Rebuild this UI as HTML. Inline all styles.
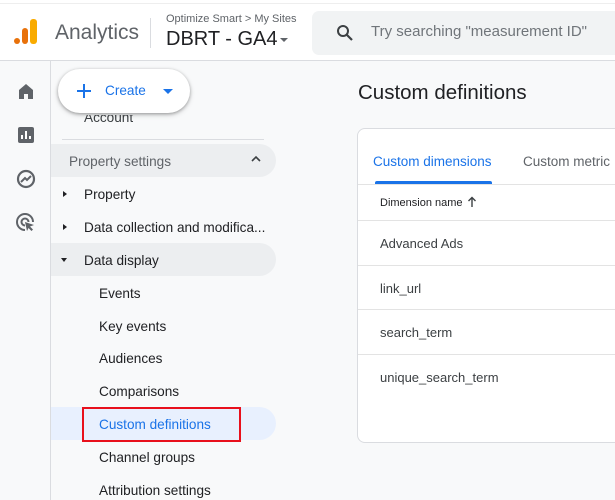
<!DOCTYPE html>
<html><head><style>
*{margin:0;padding:0;box-sizing:border-box}
body{width:615px;height:500px;overflow:hidden;background:#f8f9fa;font-family:"Liberation Sans",Arial,sans-serif;position:relative;color:#202124}
.a{position:absolute;white-space:nowrap}
.hdr{left:0;top:0;width:615px;height:61px;background:#fff;border-bottom:1px solid #dadce0}
.rail{left:0;top:61px;width:51px;height:439px;border-right:1px solid #dadce0;background:#f8f9fa}
.nav{font-size:13.6px;color:#202124}
.tri{width:0;height:0;border-top:3px solid transparent;border-bottom:3px solid transparent;border-left:4px solid #202124}
.row{left:358px;width:260px;border-top:1px solid #e3e3e3;height:0}
</style></head><body>
<div class="a hdr"></div>
<div class="a" style="top:3px;left:0;width:615px;border-top:1px solid #eee"></div>
<div class="a" style="left:14px;top:38px;width:6px;height:6px;border-radius:3px;background:#e8710a"></div>
<div class="a" style="left:22px;top:28px;width:6px;height:16px;border-radius:3px;background:#e8710a"></div>
<div class="a" style="left:30px;top:19px;width:7px;height:25px;border-radius:3px;background:#f9ab00"></div>
<div class="a" style="left:55px;top:21px;font-size:21px;color:#5f6368">Analytics</div>
<div class="a" style="left:150px;top:18px;height:30px;border-left:1px solid #dadce0"></div>
<div class="a" style="left:166px;top:13px;font-size:11px;color:#5f6368">Optimize Smart &gt; My Sites</div>
<div class="a" style="left:166px;top:28px;font-size:20px;color:#202124">DBRT - GA4</div>
<div class="a" style="left:280px;top:38px;border-left:4px solid transparent;border-right:4px solid transparent;border-top:4px solid #5f6368"></div>
<div class="a" style="left:312px;top:11px;width:310px;height:44px;background:#f1f3f4;border-radius:7px"></div>
<svg class="a" style="left:336px;top:24px" width="18" height="18" viewBox="0 0 18 18"><circle cx="7" cy="7" r="5" fill="none" stroke="#3c4043" stroke-width="2"/><path d="M11 11l5 5" stroke="#3c4043" stroke-width="2.2"/></svg>
<div class="a" style="left:371px;top:23px;font-size:15px;color:#70757a">Try searching "measurement ID"</div>
<div class="a rail"></div>
<svg class="a" style="left:17px;top:82px" width="18" height="18" viewBox="0 0 18 18"><path d="M2 8L9 2l7 6v9h-5v-5H7v5H2z" fill="#5f6368"/></svg>
<svg class="a" style="left:17px;top:126px" width="18" height="18" viewBox="0 0 18 18"><rect x="1" y="1" width="16" height="16" rx="2" fill="#5f6368"/><path d="M5 13V9M9 13V5M13 13v-3" stroke="#fff" stroke-width="2"/></svg>
<svg class="a" style="left:16px;top:169px" width="20" height="20" viewBox="0 0 20 20"><circle cx="10" cy="10" r="8" fill="none" stroke="#5f6368" stroke-width="2.2"/><path d="M5 13l4-4 2 2 4-4" fill="none" stroke="#5f6368" stroke-width="2"/></svg>
<svg class="a" style="left:16px;top:213px" width="20" height="20" viewBox="0 0 20 20"><path d="M9 17A8 8 0 1 1 17 9" fill="none" stroke="#5f6368" stroke-width="2"/><path d="M9 12.5A3.5 3.5 0 1 1 12.5 9" fill="none" stroke="#5f6368" stroke-width="2"/><path d="M9 9l9 3-4 1.5 3 3-1.5 1.5-3-3L11 18z" fill="#5f6368"/></svg>
<div class="a nav" style="left:84px;top:110px;color:#3c4043;clip-path:inset(5px 0 0 0)">Account</div>
<div class="a" style="left:62px;top:139px;width:202px;border-top:1px solid #dadce0"></div>
<div class="a" style="left:51px;top:144px;width:225px;height:33px;background:#eceef0;border-radius:0 17px 17px 0"></div>
<div class="a" style="left:69px;top:154px;font-size:13.6px;color:#5f6368">Property settings</div>
<svg class="a" style="left:250px;top:155px" width="12" height="8" viewBox="0 0 12 8"><path d="M2 6l4-4 4 4" fill="none" stroke="#3c4043" stroke-width="1.6"/></svg>
<div class="a tri" style="left:63px;top:191px"></div>
<div class="a nav" style="left:84px;top:187px">Property</div>
<div class="a tri" style="left:63px;top:224px"></div>
<div class="a nav" style="left:84px;top:220px">Data collection and modifica...</div>
<div class="a" style="left:51px;top:243px;width:225px;height:33px;background:#eceef0;border-radius:0 17px 17px 0"></div>
<div class="a" style="left:61px;top:258px;border-left:3px solid transparent;border-right:3px solid transparent;border-top:4px solid #202124"></div>
<div class="a nav" style="left:84px;top:253px">Data display</div>
<div class="a nav" style="left:99px;top:286px">Events</div>
<div class="a nav" style="left:99px;top:319px">Key events</div>
<div class="a nav" style="left:99px;top:351px">Audiences</div>
<div class="a nav" style="left:99px;top:384px">Comparisons</div>
<div class="a" style="left:51px;top:407px;width:225px;height:33px;background:#e8f0fe;border-radius:0 17px 17px 0"></div>
<div class="a" style="left:82px;top:407px;width:159px;height:35px;border:2px solid #e8101c"></div>
<div class="a nav" style="left:99px;top:417px;color:#1a73e8">Custom definitions</div>
<div class="a nav" style="left:99px;top:450px">Channel groups</div>
<div class="a nav" style="left:99px;top:483px">Attribution settings</div>
<div class="a" style="left:58px;top:69px;width:132px;height:44px;background:#fff;border-radius:22px;box-shadow:0 1px 3px rgba(0,0,0,.3),0 2px 6px rgba(0,0,0,.15)"></div>
<svg class="a" style="left:75px;top:82px" width="18" height="18" viewBox="0 0 18 18"><path d="M9 2v14M2 9h14" stroke="#1a73e8" stroke-width="2"/></svg>
<div class="a" style="left:105px;top:83px;font-size:13.6px;color:#1a73e8">Create</div>
<div class="a" style="left:163px;top:89px;border-left:5px solid transparent;border-right:5px solid transparent;border-top:5px solid #1a73e8"></div>
<div class="a" style="left:358px;top:81px;font-size:20.5px;color:#202124">Custom definitions</div>
<div class="a" style="left:357px;top:128px;width:270px;height:315px;background:#fff;border:1px solid #dadce0;border-radius:8px"></div>
<div class="a" style="left:373px;top:154px;font-size:13.5px;color:#1a73e8">Custom dimensions</div>
<div class="a" style="left:523px;top:154px;font-size:13.5px;color:#5f6368">Custom metric</div>
<div class="a" style="left:375px;top:181px;width:117px;height:3px;background:#1a73e8;border-radius:2px 2px 0 0"></div>
<div class="a row" style="top:184px"></div>
<div class="a" style="left:380px;top:197px;font-size:11px;color:#202124">Dimension name</div>
<svg class="a" style="left:467px;top:196px" width="10" height="12" viewBox="0 0 10 12"><path d="M5 11V2M1.5 5L5 1.5 8.5 5" fill="none" stroke="#3c4043" stroke-width="1.4"/></svg>
<div class="a row" style="top:220px"></div>
<div class="a" style="left:380px;top:236px;font-size:13px;color:#3c4043">Advanced Ads</div>
<div class="a row" style="top:265px"></div>
<div class="a" style="left:380px;top:281px;font-size:13px;color:#3c4043">link_url</div>
<div class="a row" style="top:309px"></div>
<div class="a" style="left:380px;top:325px;font-size:13px;color:#3c4043">search_term</div>
<div class="a row" style="top:354px"></div>
<div class="a" style="left:380px;top:370px;font-size:13px;color:#3c4043">unique_search_term</div>
</body></html>
